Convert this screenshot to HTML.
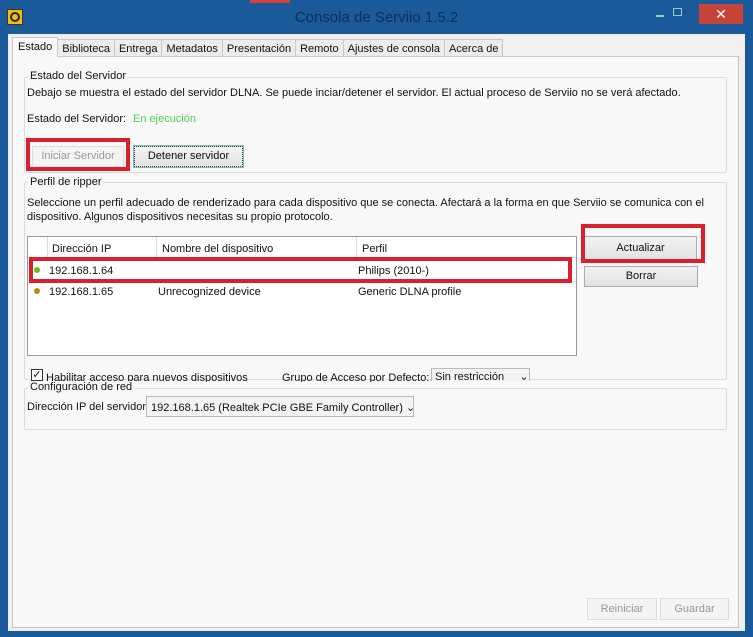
<!DOCTYPE html>
<html><head><meta charset="utf-8"><style>
*{box-sizing:border-box;margin:0;padding:0}
body{width:753px;height:637px;overflow:hidden;background:#1b5a9a;font-family:"Liberation Sans",sans-serif;font-size:11px;color:#111;position:relative}
.a{position:absolute;white-space:nowrap}
.btn{position:absolute;background:linear-gradient(#f2f2f2,#e2e2e2);border:1px solid #adadad;text-align:center;font-size:11px}
.grp{position:absolute;border:1px solid #dcdcdc;border-radius:2px}
.lbl{position:absolute;background:#f7f7f7;padding:0 2px;font-size:11px}
.red{position:absolute;border:4px solid #d9202f}
.tab{border:1px solid #c8c8c8;border-left:none;padding:3px 4px 0 4px;height:18px;margin-top:2px;background:#ececec}
</style></head><body>
<div class="a" style="left:250px;top:0;width:40px;height:3px;background:#d04040"></div>
<div class="a" style="left:7px;top:9px;width:16px;height:16px;background:#f0c000;border:1px solid #333"></div>
<div class="a" style="left:10px;top:12px;width:10px;height:10px;border:2px solid #222;border-radius:50%"></div>
<div class="a" style="left:0;top:9px;width:753px;text-align:center;font-size:15px;color:#0e2f55">Consola de Serviio 1.5.2</div>
<div class="a" style="left:656px;top:15px;width:8px;height:2px;background:#9cb"></div>
<div class="a" style="left:673px;top:8px;width:9px;height:8px;border:1px solid #9cb"></div>
<div class="a" style="left:699px;top:4px;width:44px;height:20px;background:#c7443b;color:#fff;text-align:center;font-size:14px;line-height:20px">✕</div>
<div class="a" style="left:8px;top:34px;width:737px;height:597px;background:#f0f0f0"></div>
<div class="a" style="left:12px;top:56px;width:727px;height:572px;background:#f8f8f8;border:1px solid #c8c8c8"></div>
<div class="a" style="left:12px;top:37px;height:20px;display:flex;font-size:11px">
<div style="background:#f8f8f8;border:1px solid #c8c8c8;border-bottom:none;padding:3px 5px;height:20px">Estado</div>
<div class="tab">Biblioteca</div>
<div class="tab">Entrega</div>
<div class="tab">Metadatos</div>
<div class="tab">Presentación</div>
<div class="tab">Remoto</div>
<div class="tab">Ajustes de consola</div>
<div class="tab">Acerca de</div>
</div>
<div class="grp" style="left:24px;top:77px;width:703px;height:96px"></div>
<div class="lbl" style="left:28px;top:70px">Estado del Servidor</div>
<div class="a" style="left:27px;top:87px">Debajo se muestra el estado del servidor DLNA. Se puede inciar/detener el servidor. El actual proceso de Serviio no se verá afectado.</div>
<div class="a" style="left:27px;top:113px">Estado del Servidor:</div>
<div class="a" style="left:133px;top:113px;color:#4cd04c">En ejecución</div>
<div class="btn" style="left:32px;top:146px;width:92px;height:21px;line-height:19px;color:#999;background:#f4f4f4;border-color:#ddd">Iniciar Servidor</div>
<div class="red" style="left:26px;top:138px;width:104px;height:33px"></div>
<div class="btn" style="left:134px;top:146px;width:109px;height:21px;line-height:19px;border:1px dotted #333;outline:1px solid #7bb">Detener servidor</div>
<div class="grp" style="left:24px;top:182px;width:703px;height:198px"></div>
<div class="lbl" style="left:28px;top:176px">Perfil de ripper</div>
<div class="a" style="left:27px;top:196px;width:690px;line-height:14px;white-space:normal">Seleccione un perfil adecuado de renderizado para cada dispositivo que se conecta. Afectará a la forma en que Serviio se comunica con el dispositivo. Algunos dispositivos necesitas su propio protocolo.</div>
<div class="a" style="left:27px;top:236px;width:550px;height:120px;background:#fff;border:1px solid #999"></div>
<div class="a" style="left:28px;top:237px;width:548px;height:21px;border-bottom:1px solid #ddd"></div>
<div class="a" style="left:47px;top:237px;width:1px;height:21px;background:#ddd"></div>
<div class="a" style="left:156px;top:237px;width:1px;height:21px;background:#ddd"></div>
<div class="a" style="left:356px;top:237px;width:1px;height:21px;background:#ddd"></div>
<div class="a" style="left:52px;top:243px">Dirección IP</div>
<div class="a" style="left:162px;top:243px">Nombre del dispositivo</div>
<div class="a" style="left:362px;top:243px">Perfil</div>
<div class="a" style="left:28px;top:281px;width:548px;height:1px;background:#ddd"></div>
<div class="a" style="left:34px;top:267px;width:6px;height:6px;border-radius:50%;background:#6ab81e"></div>
<div class="a" style="left:49px;top:265px">192.168.1.64</div>
<div class="a" style="left:358px;top:265px">Philips (2010-)</div>
<div class="red" style="left:29px;top:257px;width:543px;height:26px"></div>
<div class="a" style="left:34px;top:288px;width:6px;height:6px;border-radius:50%;background:#b88a10"></div>
<div class="a" style="left:49px;top:286px">192.168.1.65</div>
<div class="a" style="left:158px;top:286px">Unrecognized device</div>
<div class="a" style="left:358px;top:286px">Generic DLNA profile</div>
<div class="btn" style="left:584px;top:236px;width:113px;height:24px;line-height:22px">Actualizar</div>
<div class="red" style="left:581px;top:224px;width:124px;height:39px"></div>
<div class="btn" style="left:584px;top:266px;width:114px;height:21px;line-height:19px">Borrar</div>
<div class="a" style="left:31px;top:369px;width:12px;height:12px;border:1px solid #333;background:#fff;font-size:11px;line-height:10px;text-align:center">✓</div>
<div class="a" style="left:46px;top:371px;height:11px;overflow:hidden;line-height:14px">Habilitar acceso para nuevos dispositivos</div>
<div class="a" style="left:282px;top:371px;height:11px;overflow:hidden;line-height:14px">Grupo de Acceso por Defecto:</div>
<div class="a" style="left:431px;top:368px;width:99px;height:13px;border:1px solid #bbb;border-bottom:none;background:#f3f3f3;padding-left:3px;line-height:16px;overflow:hidden">Sin restricción &nbsp;&nbsp;&nbsp;&nbsp;⌄</div>
<div class="grp" style="left:24px;top:388px;width:703px;height:42px"></div>
<div class="lbl" style="left:28px;top:381px;background:#f7f7f7">Configuración de red</div>
<div class="a" style="left:27px;top:401px">Dirección IP del servidor</div>
<div class="a" style="left:146px;top:396px;width:268px;height:21px;border:1px solid #bbb;background:#f3f3f3;padding:4px 4px;overflow:hidden">192.168.1.65 (Realtek PCIe GBE Family Controller) ⌄</div>
<div class="btn" style="left:587px;top:598px;width:70px;height:22px;line-height:20px;color:#999;background:#f4f4f4;border-color:#ddd">Reiniciar</div>
<div class="btn" style="left:660px;top:598px;width:69px;height:22px;line-height:20px;color:#999;background:#f4f4f4;border-color:#ddd">Guardar</div>
</body></html>
